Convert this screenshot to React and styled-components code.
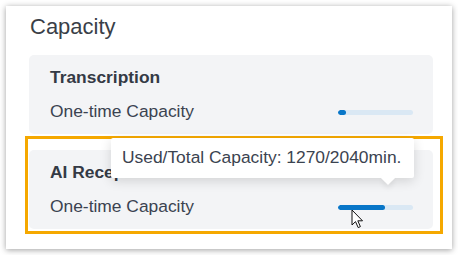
import React from 'react';
import styled, { createGlobalStyle } from 'styled-components';

const items = [
  { name: 'Transcription', label: 'One-time Capacity', used: 8, total: 75 },
  {
    name: 'AI Receptionist',
    label: 'One-time Capacity',
    used: 1270,
    total: 2040,
    active: true,
  },
];

export default function App() {
  return (
    <Page>
      <GlobalStyle />
      <Panel>
        <Title>Capacity</Title>
        <CardList>
          {items.map((item) => {
            const pct = Math.round((item.used / item.total) * 1000) / 10;
            const card = (
              <Card key={item.name}>
                <CardName>{item.name}</CardName>
                <Row>
                  <RowLabel>{item.label}</RowLabel>
                  <Track>
                    <Fill style={{ width: `${pct}%` }} />
                  </Track>
                </Row>
              </Card>
            );
            if (!item.active) return card;
            return (
              <Highlighted key={item.name}>
                {card}
                <Frame />
                <Tooltip>
                  Used/Total Capacity: {item.used}/{item.total}min.
                </Tooltip>
                <Cursor viewBox="0 0 13 20" width="13" height="20">
                  <path
                    d="M1 1 L1 16 L4.5 12.6 L7.2 18.6 L9.4 17.6 L6.8 11.8 L11.5 11.8 Z"
                    fill="#fff"
                    stroke="#111"
                    strokeWidth="1"
                    strokeLinejoin="round"
                  />
                </Cursor>
              </Highlighted>
            );
          })}
        </CardList>
      </Panel>
    </Page>
  );
}

const GlobalStyle = createGlobalStyle`
  html, body {
    margin: 0;
    background: #fff;
    font-family: "Liberation Sans", Arial, sans-serif;
  }
`;

const Page = styled.div`
  padding: 6px;
  width: 458px;
  height: 255px;
  box-sizing: border-box;
`;

const Panel = styled.div`
  width: 446px;
  height: 243px;
  box-sizing: border-box;
  background: #fff;
  box-shadow: 0 1px 6px rgba(0, 0, 0, 0.38);
  padding: 8px 19px 0 23px;
`;

const Title = styled.div`
  font-size: 22px;
  line-height: 26px;
  color: #3a3f48;
  padding-left: 1px;
`;

const CardList = styled.div`
  margin-top: 15px;
  display: flex;
  flex-direction: column;
  gap: 16px;
`;

const Card = styled.div`
  background: #f3f4f6;
  border-radius: 5px;
  padding: 12px 20px 13px 21px;
  display: flex;
  flex-direction: column;
  gap: 14px;
`;

const CardName = styled.div`
  font-size: 17.4px;
  line-height: 20px;
  font-weight: 700;
  color: #343a45;
`;

const Row = styled.div`
  display: flex;
  align-items: center;
  justify-content: space-between;
`;

const RowLabel = styled.div`
  font-size: 17.4px;
  line-height: 20px;
  color: #3b4350;
`;

const Track = styled.div`
  width: 75px;
  height: 5px;
  border-radius: 3px;
  background: #dae8f4;
  overflow: hidden;
  margin-top: 2px;
`;

const Fill = styled.div`
  height: 100%;
  border-radius: 3px;
  background: #0876c8;
`;

const Highlighted = styled.div`
  position: relative;
`;

const Frame = styled.div`
  position: absolute;
  left: -4px;
  right: -10px;
  top: -14px;
  bottom: -5px;
  border: 3px solid #f5a800;
  pointer-events: none;
`;

const Tooltip = styled.div`
  position: absolute;
  left: 82px;
  top: -12px;
  width: 303px;
  height: 40px;
  box-sizing: border-box;
  padding: 9px 0 0 11px;
  background: #fff;
  border-radius: 2px;
  box-shadow: 0 3px 12px rgba(0, 0, 0, 0.14);
  font-size: 17.4px;
  line-height: 20px;
  color: #3b4350;
  white-space: nowrap;

  &::after {
    content: '';
    position: absolute;
    left: 272px;
    bottom: -5px;
    width: 10px;
    height: 10px;
    background: #fff;
    transform: rotate(45deg);
    box-shadow: 3px 3px 5px rgba(0, 0, 0, 0.06);
  }
`;

const Cursor = styled.svg`
  position: absolute;
  left: 322px;
  top: 59px;
`;
